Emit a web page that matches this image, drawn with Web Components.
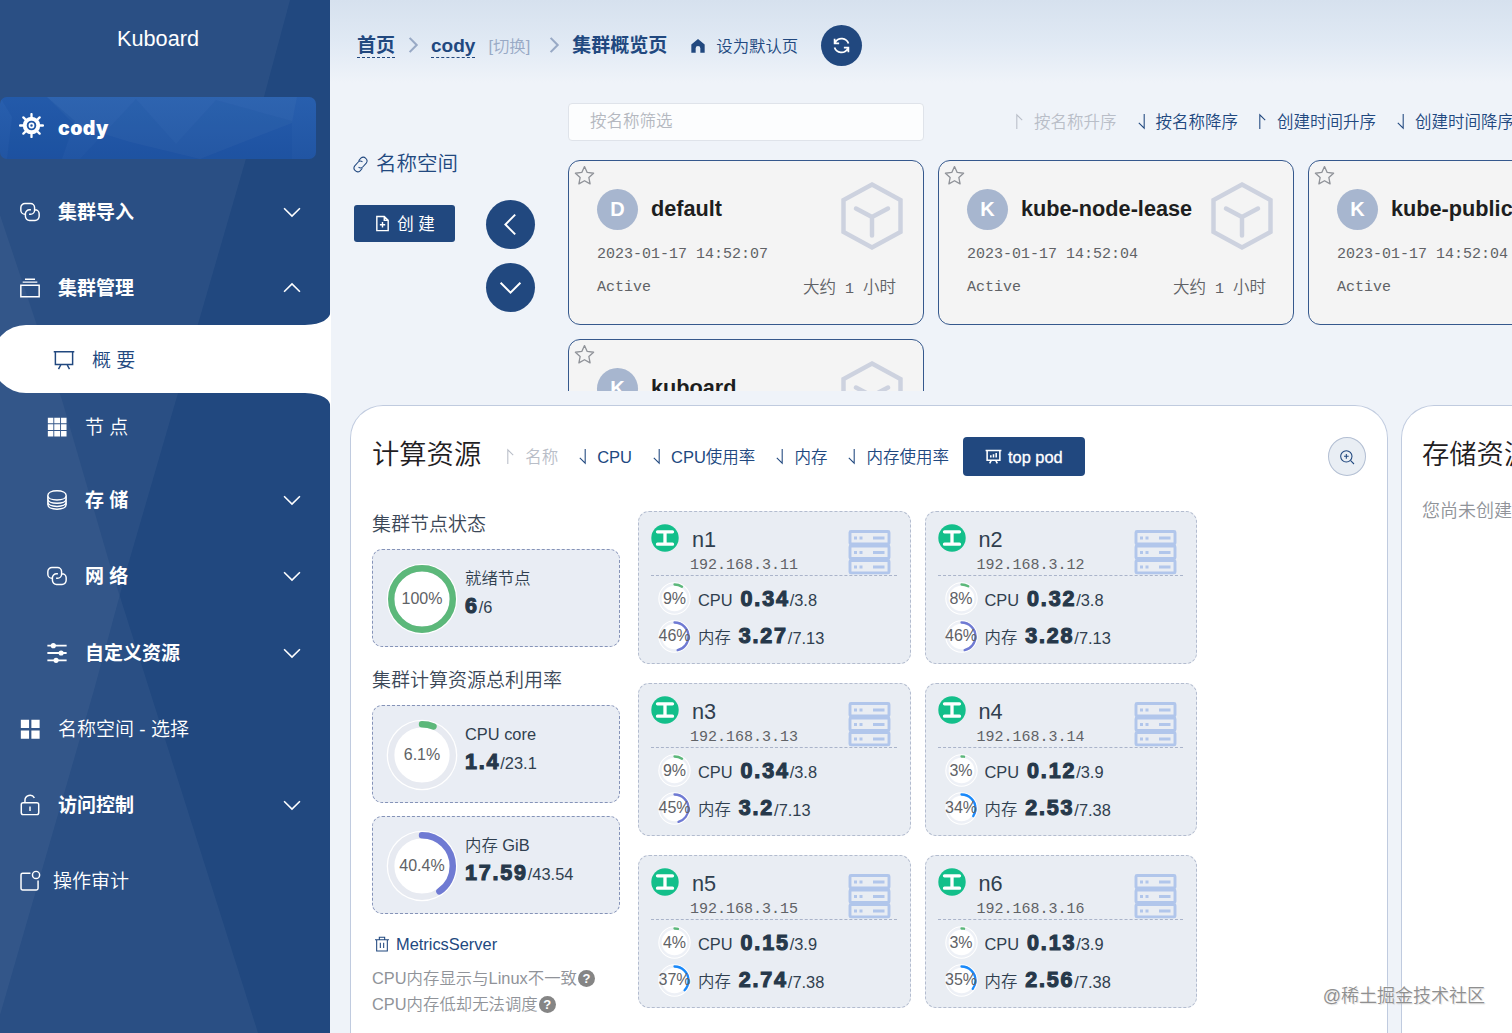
<!DOCTYPE html>
<html lang="zh-CN">
<head>
<meta charset="utf-8">
<title>Kuboard</title>
<style>
  html, body { margin: 0; height: 100%; overflow: hidden; }
  body {
    font-family: "Liberation Sans", "Noto Sans CJK SC", sans-serif;
    font-weight: 350;
    background: #eff3f9;
    color: #303133;
    --primary: #21487f;
    --mono: "Liberation Mono", "Noto Sans CJK SC", monospace;
    --sans: "Liberation Sans", "Noto Sans CJK SC", sans-serif;
  }
</style>
</head>
<body>
<kb-app></kb-app>

<script>
(function () {
    'use strict';

    const ICONS = {
        helm: '<circle cx="12" cy="12" r="6.5" fill="none" stroke="currentColor" stroke-width="3.8"/><circle cx="12" cy="12" r="2" fill="none" stroke="currentColor" stroke-width="1.6"/><path d="M12 5V1M12 19v4M5 12H1M19 12h4M7 7 4.2 4.2M17 7l2.800-2.800M7 17l-2.800 2.800M17 17l2.800 2.800" stroke="currentColor" stroke-width="2.200" stroke-linecap="round"/>',
        connection: '<path d="M6.500 14.500A4.500 4.500 0 0 1 2 10V7.300A4.500 4.500 0 0 1 6.500 2.800h6A4.500 4.500 0 0 1 17 7.300V10a4.500 4.500 0 0 1-4.500 4.500H11M17.500 9.500A4.500 4.500 0 0 1 22 14v2.700a4.500 4.500 0 0 1-4.500 4.500h-6A4.500 4.500 0 0 1 7 16.700V14a4.500 4.500 0 0 1 4.500-4.500H13"/>',
        files: '<path d="M2 9h20v12.500H2zM4 5.600h16M6.500 2.400h11"/>',
        board: '<path d="M.8 3h22.400M2.600 3v14h18.800V3M8.600 17.200 6 22M15.400 17.200 18 22"/>',
        chart: '<path d="M.8 3.400h22.400M3 3.400v13.800h18V3.400M8.800 17.400 6.600 21.600M15.200 17.400l2.200 4.200M8.200 13.400v-3M12 13.400V8.800M15.800 13.400V7" stroke-width="2.200"/>',
        grid9: '<path fill="currentColor" stroke="none" d="M2 2h6v6H2zM9 2h6.400v6H9zM16.400 2h6v6h-6zM2 9h6v6.400H2zM9 9h6.400v6.400H9zM16.400 9h6v6.400h-6zM2 16.400h6v6H2zM9 16.400h6.400v6H9zM16.400 16.400h6v6h-6z"/>',
        coin: '<path d="M12 2c6 0 10 2.100 10 5s-4 5-10 5S2 9.900 2 7s4-5 10-5zM2 7v10c0 2.900 4 5 10 5s10-2.100 10-5V7M2 10.600c0 2.900 4 5 10 5s10-2.100 10-5M2 14c0 2.900 4 5 10 5s10-2.100 10-5"/>',
        sliders: '<path d="M1.500 4h21M1.500 12h21M1.500 20h21" stroke-width="2"/><g fill="currentColor" stroke="none"><circle cx="8" cy="4" r="2.800"/><circle cx="16.500" cy="12" r="2.800"/><circle cx="11" cy="20" r="2.800"/></g>',
        menu: '<path fill="currentColor" stroke="none" d="M2 2h9v9H2zM13.500 2h9v9h-9zM2 13.500h9v9H2zM13.500 13.500h9v9h-9z"/>',
        unlock: '<rect x="2.500" y="9.500" width="19" height="13" rx="2"/><path d="M6.500 9.500V6.800a5.500 5.500 0 0 1 10.300-2.600M12 13.500v5"/>',
        notice: '<path d="M12.500 3.500H4A1.800 1.800 0 0 0 2.200 5.300V20A1.800 1.800 0 0 0 4 21.800h15a1.800 1.800 0 0 0 1.800-1.800v-8.500"/><circle cx="18.600" cy="5.400" r="3.900"/>',
        down: '<path d="m2.500 7.500 9.500 9.400 9.500-9.400"/>',
        up: '<path d="m2.500 16.500 9.500-9.400 9.500 9.400"/>',
        left: '<path d="m16.500 2.500-9.400 9.500 9.400 9.500"/>',
        right: '<path d="m7.500 2.500 9.400 9.500-9.400 9.500"/>',
        home: '<path fill="currentColor" stroke="none" d="M12 1.500 22 9.800V22h-6.500v-6.500a3.500 3.500 0 0 0-7 0V22H2V9.800z"/>',
        refresh: '<path d="M3.300 3.500v5.700H9M20.700 20.500v-5.700H15M20.800 9.500A9.200 9.200 0 0 0 4.200 7.800M3.200 14.500a9.200 9.200 0 0 0 16.600 1.700"/>',
        link: '<path d="m9.300 6.700 3.200-3.600a5.200 5.200 0 0 1 7.600 7l-4.600 5.100a4.600 4.600 0 0 1-6.300.5M14.700 17.300l-3.200 3.600a5.200 5.200 0 0 1-7.600-7l4.600-5.100a4.600 4.600 0 0 1 6.300-.5"/>',
        docAdd: '<path d="M4 2h10.500L20 7.500V22H4zM14.500 2v5.500H20M12 10v7.500M8.300 13.800h7.500"/>',
        star: '<path stroke-linejoin="round" d="m12 1.800 3.100 6.700 7.300.9-5.400 5 1.400 7.200L12 18l-6.400 3.600L7 14.400l-5.400-5 7.300-.9z"/>',
        zoomIn: '<circle cx="11" cy="11" r="8.500"/><path d="m17.500 17.500 5 5M11 7.500v7M7.500 11h7"/>',
        trash: '<path d="M1.500 5.500h21M4 5.500v17h16v-17M8 5.500v-3.500h8v3.500M9.500 10v8M14.500 10v8"/>',
        asc: '<path d="M8.200 22.500V2.500l7.600 7.500"/>',
        desc: '<path d="M15.800 1.500v20L8.200 14"/>'
    };

    // shared base: open shadow root, filled from render() once attached
    class KbElement extends HTMLElement {
        constructor() {
            super();
            this.attachShadow({ mode: 'open' });
        }
        connectedCallback() {
            this.shadowRoot.innerHTML = this.render();
        }
        attr(name, fallback = '') {
            return this.hasAttribute(name) ? this.getAttribute(name) : fallback;
        }
    }

    class KbIcon extends KbElement {
        render() {
            const size = this.attr('size', '20');
            return `
            <style>
              :host { display: inline-flex; flex: none; }
              svg { display: block; }
            </style>
            <svg width="${size}" height="${size}" viewBox="0 0 24 24" fill="none" stroke="currentColor"
              stroke-width="${this.attr('stroke', '1.6')}">${ICONS[this.attr('name')] || ''}</svg>`;
        }
    }

    class KbMenuItem extends KbElement {
        render() {
            const arrow = this.attr('arrow');
            return `
            <style>
              :host {
                display: flex;
                align-items: center;
                position: relative;
                box-sizing: border-box;
                height: 76.3px;
                padding: 0 28px 0 19px;
                color: #fff;
                font-size: 19px;
                line-height: 24px;
              }
              :host([sub]) { padding-left: 46px; }
              :host([bold]) { font-weight: 700; }
              :host([open]) { height: 74.5px; padding-top: 2px; }
              :host([node]) { height: 69.5px; }
              :host([active]) { height: 68px; padding: 4px 0 0 53px; color: var(--primary); }
              .label { flex: 1; margin: 1px 0 0 17px; white-space: pre; }
              :host([tight]) .label { margin-left: 12px; }
              kb-icon, .label { position: relative; }
              kb-icon { margin-top: -1px; }
              .bg { position: absolute; left: 0; top: -16px; }
            </style>
            ${this.hasAttribute('active') ? `<svg class="bg" width="331" height="100" viewBox="0 0 331 100">
              <path fill="#fff" d="M26 16H305Q331 15 331 0V100Q331 85 305 84H26A34 34 0 0 1 26 16z"/></svg>` : ''}
            <kb-icon name="${this.attr('icon')}" size="22" stroke="1.6"></kb-icon>
            <span class="label"><slot></slot></span>
            ${arrow ? `<kb-icon name="${arrow}" size="20" stroke="1.9"></kb-icon>` : ''}`;
        }
    }

    class KbSidebar extends KbElement {
        render() {
            return `
            <style>
              :host {
                display: block;
                position: relative;
                width: 330px;
                height: 100%;
                background: var(--primary);
              }
              .facets { position: absolute; left: 0; top: 0; }
              .body { position: relative; }
              .brand {
                box-sizing: border-box;
                height: 97px;
                padding: 26px 14px 0 0;
                color: #fff;
                font-size: 21.7px;
                line-height: 26px;
                text-align: center;
              }
              .cluster {
                display: flex;
                align-items: center;
                position: relative;
                overflow: hidden;
                width: 316px;
                height: 62px;
                margin-bottom: 15px;
                border-radius: 7px;
                background: linear-gradient(#285fae, #2155a3);
                color: #fff;
              }
              .cluster svg { position: absolute; left: 0; top: 0; }
              .cluster kb-icon { position: relative; margin: -5px 0 0 19px; }
              .cluster b {
                position: relative;
                margin-left: 14px;
                font: 900 19.5px/24px Inter, "Liberation Sans", sans-serif;
                letter-spacing: .4px;
              }
            </style>
            <svg class="facets" width="330" height="1033">
              <path fill="#fff" fill-opacity=".045" d="M0 0H290L265 93 178 393 128 565 94 690 0 1015z"/>
              <path fill="#fff" fill-opacity=".045" d="M0 215 62 400 110 565 258 1033H0z"/>
            </svg>
            <div class="body">
              <div class="brand">Kuboard</div>
              <div class="cluster">
                <svg width="316" height="62">
                  <path fill="#fff" fill-opacity=".03" d="M47 0H297L292 26 200 62 130 45 75 28z"/>
                  <path fill="#003a8c" fill-opacity=".07" d="M80 62 136 2 176 47 205 62zM176 47 216 3 292 24V62H205z"/>
                  <path fill="#003a8c" fill-opacity=".12" d="M0 0H47L75 24 62 62H7L12 20z"/>
                </svg>
                <kb-icon name="helm" size="25"></kb-icon><b>cody</b>
              </div>
              <kb-menu-item bold icon="connection" arrow="down">集群导入</kb-menu-item>
              <kb-menu-item bold open icon="files" arrow="up">集群管理</kb-menu-item>
              <kb-menu-item active icon="board">概 要</kb-menu-item>
              <kb-menu-item sub node icon="grid9">节 点</kb-menu-item>
              <kb-menu-item sub bold icon="coin" arrow="down">存 储</kb-menu-item>
              <kb-menu-item sub bold icon="connection" arrow="down">网 络</kb-menu-item>
              <kb-menu-item sub bold icon="sliders" arrow="down">自定义资源</kb-menu-item>
              <kb-menu-item icon="menu">名称空间 - 选择</kb-menu-item>
              <kb-menu-item bold icon="unlock" arrow="down">访问控制</kb-menu-item>
              <kb-menu-item tight icon="notice">操作审计</kb-menu-item>
            </div>`;
        }
    }

    class KbHeader extends KbElement {
        render() {
            return `
            <style>
              :host {
                display: flex;
                align-items: center;
                box-sizing: border-box;
                height: 92px;
                padding-left: 27px;
                background: linear-gradient(#d6e1ee, #e0e9f4 45%, #eff3f9 90%);
                color: var(--primary);
                font-size: 19px;
                line-height: 22px;
                white-space: nowrap;
              }
              b { font-weight: 700; }
              .link { border-bottom: 1px dashed var(--primary); }
              .sep { color: #98a9c5; margin: -3px 9px 0 9px; }
              .switch { margin-left: 13px; color: #98a9c5; font-size: 16.4px; }
              .switch + .sep { margin-left: 15px; margin-right: 9px; }
              .default { margin-left: 10px; font-size: 16.4px; }
              .home { margin-left: 23px; }
              .round {
                display: flex;
                align-items: center;
                justify-content: center;
                width: 41px;
                height: 41px;
                margin: -1px 0 0 22.5px;
                border-radius: 50%;
                background: var(--primary);
                color: #fff;
              }
            </style>
            <b class="link">首页</b>
            <kb-icon class="sep" name="right" size="18" stroke="2.8"></kb-icon>
            <b class="link">cody</b>
            <span class="switch">[切换]</span>
            <kb-icon class="sep" name="right" size="18" stroke="2.8"></kb-icon>
            <b>集群概览页</b>
            <kb-icon class="home" name="home" size="16"></kb-icon>
            <span class="default">设为默认页</span>
            <span class="round"><kb-icon name="refresh" size="19" stroke="2.2"></kb-icon></span>`;
        }
    }

    class KbSort extends KbElement {
        render() {
            return `
            <style>
              :host {
                display: inline-flex;
                align-items: center;
                flex: none;
                gap: 6px;
                color: var(--primary);
                font-size: 16.5px;
                line-height: 20px;
                white-space: nowrap;
              }
              :host([disabled]) { color: #b9bec8; }
            </style>
            <kb-icon name="${this.attr('dir', 'desc')}" size="17" stroke="1.5"></kb-icon><slot></slot>`;
        }
    }

    class NsCard extends KbElement {
        render() {
            const name = this.attr('name');
            return `
            <style>
              :host {
                display: block;
                position: relative;
                box-sizing: border-box;
                height: 165.5px;
                padding: 28px 27px 0 28px;
                border: 1px solid #35588d;
                border-radius: 12px;
                background: #f4f4f4;
                color: #606266;
                font: 350 15px/18px var(--mono);
              }
              .star { position: absolute; left: 5px; top: 4px; color: #909399; }
              .cube { position: absolute; right: 19px; top: 20px; }
              .title { display: flex; align-items: center; gap: 13px; height: 41px; }
              .avatar {
                width: 41px;
                border-radius: 50%;
                background: #a7b6cf;
                color: #fff;
                font: 700 20px/41px "Liberation Sans", sans-serif;
                text-align: center;
              }
              .name { margin-top: -1px; color: #1d1e20; font: 700 21.7px/26px "Liberation Sans", sans-serif; }
              .date { margin-top: 16px; }
              .foot { display: flex; justify-content: space-between; margin-top: 15px; }
              .age { margin-top: 1px; }
              .age span { font-size: 16.5px; }
            </style>
            <kb-icon class="star" name="star" size="21" stroke="1.5"></kb-icon>
            <svg class="cube" width="64" height="70" viewBox="0 0 64 70" fill="none" stroke="#cdd2df" stroke-width="4.5">
              <path d="M32 3.500 60.500 19v32L32 66.500 3.500 51V19z"/>
              <path stroke-linecap="round" stroke-linejoin="round" d="m16 27.500 16 8.500 16-8.500M32 36v18.500"/>
            </svg>
            <div class="title"><span class="avatar">${name[0].toUpperCase()}</span><span class="name">${name}</span></div>
            <div class="date">${this.attr('created')}</div>
            <div class="foot"><span>Active</span><span class="age"><span>大约</span> 1 <span>小时</span></span></div>`;
        }
    }

    class NsSection extends KbElement {
        render() {
            return `
            <style>
              :host {
                display: grid;
                grid-template-columns: 132px 49px 1fr;
                height: 299px;
                padding: 0 0 0 24px;
                color: var(--primary);
                overflow: hidden;
              }
              .side { padding-top: 60px; }
              .heading { display: flex; align-items: center; gap: 7px; margin-left: -2px; font-size: 20.5px; line-height: 24px; }
              .create {
                display: flex;
                align-items: center;
                justify-content: center;
                gap: 6px;
                width: 101px;
                height: 37px;
                margin-top: 29px;
                border-radius: 3px;
                background: var(--primary);
                color: #fff;
                font-size: 16.5px;
                font-weight: 400;
                line-height: 20px;
                white-space: pre;
              }
              .nav { display: flex; flex-direction: column; gap: 14px; padding-top: 108px; }
              .nav span {
                display: flex;
                align-items: center;
                justify-content: center;
                height: 49px;
                border-radius: 50%;
                background: var(--primary);
                color: #fff;
              }
              .list { padding: 11px 0 0 33px; min-width: 0; overflow: hidden; }
              .filter { display: flex; align-items: center; height: 37.5px; margin-bottom: 19px; }
              .input {
                flex: none;
                box-sizing: border-box;
                width: 356px;
                height: 37.5px;
                padding-left: 21px;
                border: 1px solid #dfe3ea;
                border-radius: 4px;
                background: #fcfdfe;
                color: #b4b8c0;
                font-size: 16.5px;
                line-height: 35px;
              }
              .sorts { display: flex; gap: 16px; margin-left: 87px; }
              .cards { display: grid; grid-template-columns: repeat(3, 356px); gap: 14px; }
            </style>
            <div class="side">
              <div class="heading"><kb-icon name="link" size="17" stroke="1.5"></kb-icon>名称空间</div>
              <div class="create"><kb-icon name="docAdd" size="17" stroke="2"></kb-icon><span>创 建</span></div>
            </div>
            <div class="nav">
              <span><kb-icon name="left" size="25" stroke="1.9"></kb-icon></span>
              <span><kb-icon name="down" size="25" stroke="1.9"></kb-icon></span>
            </div>
            <div class="list">
              <div class="filter">
                <div class="input">按名称筛选</div>
                <div class="sorts">
                  <kb-sort dir="asc" disabled>按名称升序</kb-sort>
                  <kb-sort>按名称降序</kb-sort>
                  <kb-sort dir="asc">创建时间升序</kb-sort>
                  <kb-sort>创建时间降序</kb-sort>
                </div>
              </div>
              <div class="cards">
                <ns-card name="default" created="2023-01-17 14:52:07"></ns-card>
                <ns-card name="kube-node-lease" created="2023-01-17 14:52:04"></ns-card>
                <ns-card name="kube-public" created="2023-01-17 14:52:04"></ns-card>
                <ns-card name="kuboard" created="2023-01-17 14:52:04"></ns-card>
              </div>
            </div>`;
        }
    }

    class KbRing extends KbElement {
        render() {
            const small = this.hasAttribute('small');
            const p = parseFloat(this.attr('percent'));
            const box = small ? 33 : 72;
            const r = small ? 14 : 30.8;
            const w = small ? 2.3 : 6.4;
            const len = 2 * Math.PI * r;
            const color = p >= 100 || p < 30 ? '#5cb87a' : p < 40 ? '#1989fa' : '#6f7ad3';
            return `
            <style>
              :host { display: grid; flex: none; width: ${box}px; height: ${box}px; place-items: center; }
              svg, span { grid-area: 1 / 1; }
              span { color: #606266; font-size: 16px; line-height: 18px; white-space: nowrap; }
            </style>
            <svg width="${box}" height="${box}" viewBox="${-box / 2} ${-box / 2} ${box} ${box}" fill="none">
              <circle r="${small ? 16.2 : 35.3}" fill="#fff"/>
              <circle r="${r}" stroke="${small ? '#edf0f6' : '#e7eaf1'}" stroke-width="${w}"/>
              <circle r="${r}" stroke="${color}" stroke-width="${w}" stroke-linecap="round"
                stroke-dasharray="${len * p / 100} ${len}" transform="rotate(-90)"/>
            </svg>
            <span>${this.attr('percent')}%</span>`;
        }
    }

    class StatCard extends KbElement {
        render() {
            return `
            <style>
              :host {
                display: flex;
                align-items: center;
                gap: 7px;
                box-sizing: border-box;
                height: 98px;
                padding: 2px 0 0 13px;
                border: 1px dashed #8593b8;
                border-radius: 10px;
                background: #e9edf4;
                color: #303f4f;
                font-size: 16.4px;
              }
              .label { line-height: 28px; margin-top: -14px; }
              .value { height: 28px; line-height: 28px; white-space: nowrap; }
              b { color: #26384a; font: 700 21.5px/28px var(--sans); letter-spacing: 1.8px; -webkit-text-stroke: 1.1px; }
            </style>
            <kb-ring percent="${this.attr('percent')}"></kb-ring>
            <div>
              <div class="label"><slot></slot></div>
              <div class="value"><b>${this.attr('used')}</b>/${this.attr('total')}</div>
            </div>`;
        }
    }

    class NodeCard extends KbElement {
        metric(label, value) {
            const [percent, used, total] = value.split(' ');
            return `<div class="metric"><kb-ring small percent="${percent}"></kb-ring>
              <span class="key">${label}</span><b>${used}</b><span>/${total}</span></div>`;
        }
        render() {
            const unit = y => `<rect x="2" y="${y}" width="39" height="12.4" rx="1"/>
              <path stroke-width="3" d="M6 ${y + 6.5}h3M11.500 ${y + 6.5}h3M25 ${y + 6.5}h11.500"/>`;
            return `
            <style>
              :host {
                display: block;
                box-sizing: border-box;
                height: 153px;
                padding: 0 13px 0 12px;
                border: 1px dashed #b3bccf;
                border-radius: 11px;
                background: #e9edf3;
                color: #303f4f;
              }
              .head { display: flex; box-sizing: border-box; height: 64px; padding-top: 12px; border-bottom: 1px dashed #aab4ca; }
              .names { flex: 1; margin-left: 11px; }
              .name { margin-left: 2px; font-size: 21.7px; line-height: 32px; }
              .ip { margin-top: 1px; color: #606266; font: 15px/18px var(--mono); }
              .server { margin: 6px 6px 0 0; }
              .metrics { padding: 4px 0 0 7px; }
              .metric { display: flex; align-items: center; height: 37.5px; font-size: 16.4px; line-height: 22px; }
              .key { margin: 2px 7px 0 7px; }
              b { margin-left: 1px; color: #26384a; font: 700 21.5px/24px var(--sans); letter-spacing: 1.8px; -webkit-text-stroke: 1.1px; }
              b + span { margin-top: 3px; }
            </style>
            <div class="head">
              <svg width="28" height="28" viewBox="0 0 28 28"><circle cx="14" cy="14" r="13.7" fill="#13bf8a"/>
                <path d="M6.500 7.800h15M6.500 20.200h15M14 8v12" stroke="#fff" stroke-width="3.3" stroke-linecap="round"/></svg>
              <div class="names"><div class="name">${this.attr('name')}</div><div class="ip">${this.attr('ip')}</div></div>
              <svg class="server" width="43" height="45" viewBox="0 0 43 45" fill="none" stroke="#b1c6eb" stroke-width="2.9">
                ${unit(1.5)}${unit(16)}${unit(30.5)}</svg>
            </div>
            <div class="metrics">${this.metric('CPU', this.attr('cpu'))}${this.metric('内存', this.attr('mem'))}</div>`;
        }
    }

    class KbPanel extends KbElement {
        render() {
            return `
            <style>
              :host {
                display: block;
                box-sizing: border-box;
                flex: none;
                padding: 31px 21px 0;
                border: 1px solid #c0cbdf;
                border-bottom: 0;
                border-radius: 33px 33px 0 0;
                background: #fff;
              }
              header { display: flex; align-items: center; height: 39px; color: #1f2022; font-size: 27.3px; line-height: 34px; white-space: nowrap; }
              .title { margin-top: -4px; }
            </style>
            <header><span class="title">${this.attr('heading')}</span><slot name="tools"></slot></header>
            <slot></slot>`;
        }
    }

    class ComputeTools extends KbElement {
        render() {
            return `
            <style>
              :host { display: flex; flex: 1; align-items: center; padding-left: 21px; font-size: 16.5px; line-height: 20px; }
              .sorts { display: flex; gap: 16px; }
              .pod {
                display: flex;
                align-items: center;
                justify-content: center;
                gap: 6px;
                width: 122px;
                height: 39px;
                margin-left: 14px;
                border-radius: 4px;
                background: var(--primary);
                color: #fff;
                font-size: 16.4px;
                -webkit-text-stroke: .3px #fff;
              }
              .zoom {
                display: flex;
                align-items: center;
                justify-content: center;
                box-sizing: border-box;
                width: 38px;
                height: 39px;
                margin-left: auto;
                border: 1px solid #b3bfd3;
                border-radius: 50%;
                background: #e9eef4;
                color: var(--primary);
              }
            </style>
            <div class="sorts">
              <kb-sort dir="asc" disabled>名称</kb-sort>
              <kb-sort>CPU</kb-sort>
              <kb-sort>CPU使用率</kb-sort>
              <kb-sort>内存</kb-sort>
              <kb-sort>内存使用率</kb-sort>
            </div>
            <div class="pod"><kb-icon name="chart" size="17"></kb-icon>top pod</div>
            <div class="zoom"><kb-icon name="zoomIn" size="16"></kb-icon></div>`;
        }
    }

    class ComputeBody extends KbElement {
        render() {
            return `
            <style>
              :host { display: grid; grid-template-columns: 248px 559px; gap: 18px; margin-top: 35px; }
              h4 { box-sizing: border-box; margin: 0; height: 37.5px; padding-top: 1px; color: #3c4858; font-size: 19px; font-weight: 350; line-height: 26px; }
              stat-card + h4 { margin-top: 20.5px; }
              stat-card + stat-card { margin-top: 13.5px; }
              .metrics-server {
                display: flex;
                align-items: center;
                gap: 6px;
                margin: 19px 0 11px 2px;
                color: var(--primary);
                font-size: 16.4px;
                line-height: 22px;
              }
              .tip { display: flex; align-items: center; color: #909399; font-size: 16.4px; line-height: 25.5px; white-space: nowrap; }
              .tip i {
                width: 17px;
                height: 17px;
                margin-left: 1px;
                border-radius: 50%;
                background: #858585;
                color: #fff;
                font: 700 13px/17px "Liberation Sans", sans-serif;
                text-align: center;
              }
              .nodes { display: grid; grid-template-columns: 1fr 1fr; gap: 19.1px 14px; align-content: start; }
            </style>
            <div>
              <h4>集群节点状态</h4>
              <stat-card percent="100" used="6" total="6">就绪节点</stat-card>
              <h4>集群计算资源总利用率</h4>
              <stat-card percent="6.1" used="1.4" total="23.1">CPU core</stat-card>
              <stat-card percent="40.4" used="17.59" total="43.54">内存 GiB</stat-card>
              <div class="metrics-server"><kb-icon name="trash" size="16"></kb-icon>MetricsServer</div>
              <div class="tip">CPU内存显示与Linux不一致<i>?</i></div>
              <div class="tip">CPU内存低却无法调度<i>?</i></div>
            </div>
            <div class="nodes">
              <node-card name="n1" ip="192.168.3.11" cpu="9 0.34 3.8" mem="46 3.27 7.13"></node-card>
              <node-card name="n2" ip="192.168.3.12" cpu="8 0.32 3.8" mem="46 3.28 7.13"></node-card>
              <node-card name="n3" ip="192.168.3.13" cpu="9 0.34 3.8" mem="45 3.2 7.13"></node-card>
              <node-card name="n4" ip="192.168.3.14" cpu="3 0.12 3.9" mem="34 2.53 7.38"></node-card>
              <node-card name="n5" ip="192.168.3.15" cpu="4 0.15 3.9" mem="37 2.74 7.38"></node-card>
              <node-card name="n6" ip="192.168.3.16" cpu="3 0.13 3.9" mem="35 2.56 7.38"></node-card>
            </div>`;
        }
    }

    class KbApp extends KbElement {
        render() {
            return `
            <style>
              :host { display: grid; grid-template-columns: 330px 1fr; height: 100vh; overflow: hidden; position: relative; }
              main { min-width: 0; overflow: hidden; display: flex; flex-direction: column; }
              .panels { display: flex; flex: 1; gap: 13px; margin: 14px 0 0 20px; }
              .compute { width: 1038px; }
              .storage { width: 700px; padding-left: 20px; }
              .empty { margin-top: 23px; color: #909399; font-size: 18px; line-height: 24px; }
              .watermark {
                position: absolute;
                right: 27px;
                bottom: 25px;
                color: #8f8f8f;
                font-size: 18px;
                line-height: 24px;
                text-shadow: 0 0 2px #fff, 1px 1px 1px rgba(0,0,0,.15);
              }
            </style>
            <kb-sidebar></kb-sidebar>
            <main>
              <kb-header></kb-header>
              <ns-section></ns-section>
              <div class="panels">
                <kb-panel class="compute" heading="计算资源">
                  <compute-tools slot="tools"></compute-tools>
                  <compute-body></compute-body>
                </kb-panel>
                <kb-panel class="storage" heading="存储资源">
                  <div class="empty">您尚未创建</div>
                </kb-panel>
              </div>
            </main>
            <div class="watermark">@稀土掘金技术社区</div>`;
        }
    }

    customElements.define('kb-icon', KbIcon);
    customElements.define('kb-menu-item', KbMenuItem);
    customElements.define('kb-sidebar', KbSidebar);
    customElements.define('kb-header', KbHeader);
    customElements.define('kb-sort', KbSort);
    customElements.define('ns-card', NsCard);
    customElements.define('ns-section', NsSection);
    customElements.define('kb-ring', KbRing);
    customElements.define('stat-card', StatCard);
    customElements.define('node-card', NodeCard);
    customElements.define('kb-panel', KbPanel);
    customElements.define('compute-tools', ComputeTools);
    customElements.define('compute-body', ComputeBody);
    customElements.define('kb-app', KbApp);
})();
</script>
</body>
</html>
